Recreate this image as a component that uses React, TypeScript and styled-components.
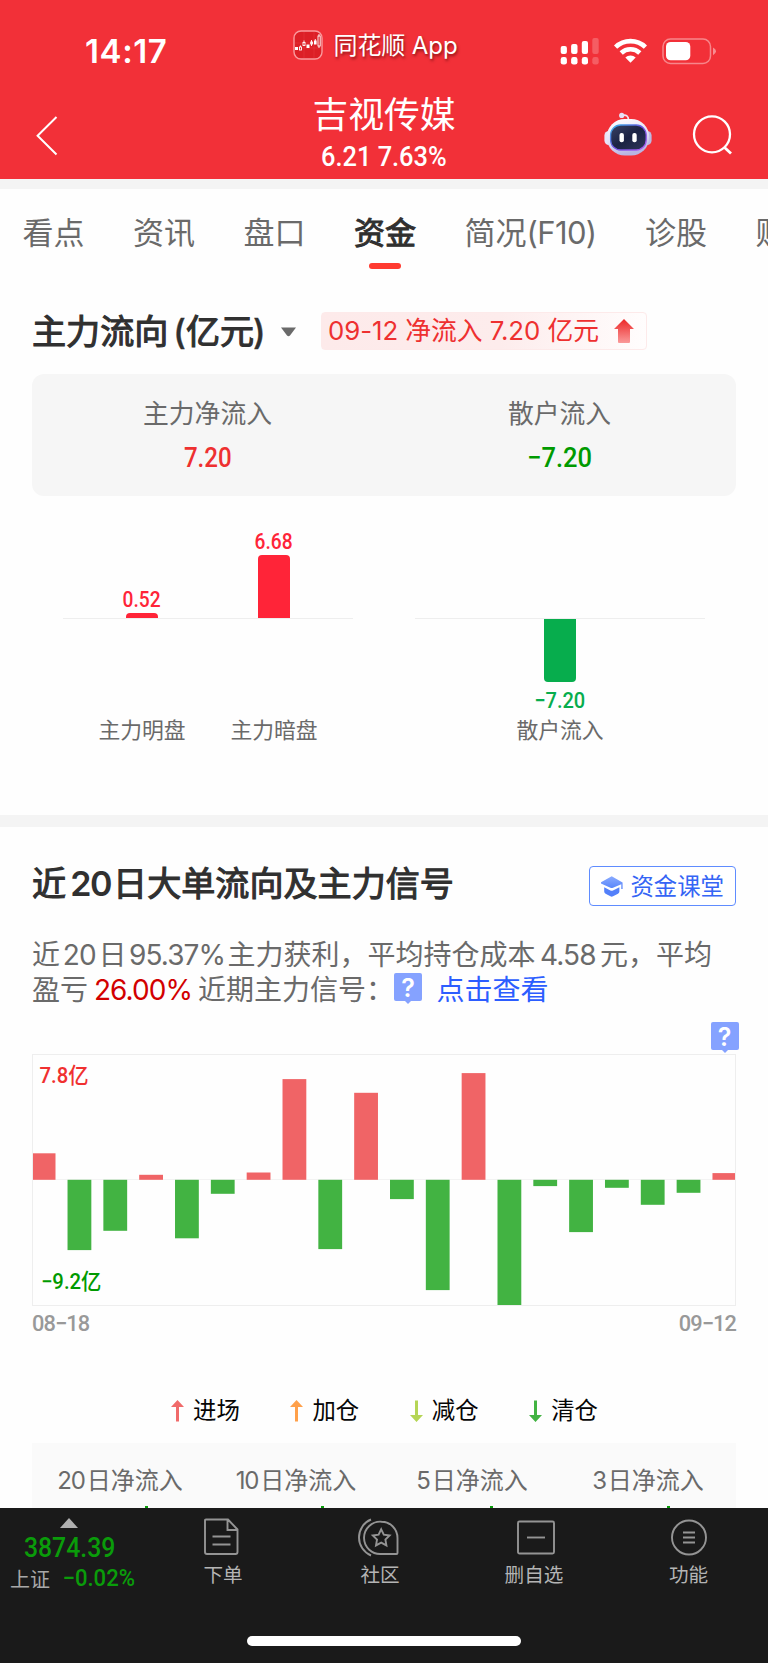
import React from "react";
import styled, { createGlobalStyle } from "styled-components";

const cjk = '"Noto Sans CJK SC", sans-serif';
const sans = `Inter, ${cjk}`;
const din = `Roboto, ${cjk}`;

const GlobalStyle = createGlobalStyle`
  *, *::before, *::after { box-sizing: border-box; }
  body { margin: 0; background: #fff; font-family: ${sans}; }
  svg { display: block; flex: none; overflow: visible; }
`;

const Screen = styled.div`
  width: 768px;
  height: 1663px;
  display: flex;
  flex-direction: column;
  overflow: hidden;
  background: #fefefe;
  white-space: nowrap;
`;

/* Figures set in a narrow DIN-like face */
const Figure = styled.span<{ $size: number; $narrow?: number; $weight?: number; $track?: number }>`
  display: block;
  font-family: ${din};
  font-size: ${(p) => p.$size}px;
  font-weight: ${(p) => p.$weight ?? 500};
  line-height: ${(p) => Math.round(p.$size * 1.15)}px;
  letter-spacing: ${(p) => p.$track ?? 0}px;
  transform: scaleX(${(p) => p.$narrow ?? 0.94});
`;

const Header = styled.header`
  height: 179px;
  background: #f23038;
  color: #fff;
`;

const StatusBar = styled.div`
  height: 90px;
  padding: 30px 51px 0 85px;
  display: flex;
  align-items: flex-start;
`;

const Time = styled.div`
  width: 208px;
  padding-top: 1px;
  font-size: 33px;
  font-weight: 600;
  line-height: 40px;
  letter-spacing: 0.6px;
`;

const AppTag = styled.div`
  display: flex;
  gap: 10.5px;
  height: 30px;
  line-height: 31px;
  font-size: 24px;
  letter-spacing: -0.1px;
  text-shadow: 1px 2px 3px rgba(70, 0, 0, 0.6);
`;

const StatusIcons = styled.div`
  margin-left: auto;
  padding-top: 8px;
  display: flex;
  gap: 15px;
`;

const NavBar = styled.div`
  height: 89px;
  padding: 0 36px 0 36px;
  display: grid;
  grid-template-columns: 128px 1fr 128px;
`;

const BackSlot = styled.div`
  padding-top: 26px;
`;

const StockTitle = styled.div`
  display: flex;
  flex-direction: column;
  align-items: center;
`;

const StockName = styled.div`
  font-size: 35.8px;
  line-height: 50px;
  margin-bottom: 2px;
`;

const NavActions = styled.div`
  display: flex;
  justify-content: flex-end;
  gap: 40px;
  padding-top: 22px;
`;

const Divider = styled.div<{ $height: number }>`
  flex: none;
  height: ${(p) => p.$height}px;
  background: #f4f4f4;
`;

const Tabs = styled.nav`
  height: 112px;
  padding: 18px 0 0 22.5px;
  display: flex;
  gap: 48.5px;
  overflow: hidden;
`;

const Tab = styled.div<{ $active?: boolean }>`
  flex: none;
  display: flex;
  flex-direction: column;
  align-items: center;
  font-size: 31px;
  line-height: 51px;
  height: 70px;
  color: ${(p) => (p.$active ? "#303030" : "#6a6a6a")};
  -webkit-text-stroke: ${(p) => (p.$active ? "1px #303030" : "0")};
  &::after {
    content: "";
    display: ${(p) => (p.$active ? "block" : "none")};
    width: 32px;
    height: 6px;
    margin-top: 5px;
    border-radius: 3px;
    background: #ff3a30;
  }
`;

const TabLatin = styled.span`
  letter-spacing: -0.6px;
`;

const FlowHead = styled.div`
  height: 73px;
  padding: 11px 32px 0;
  display: flex;
  align-items: flex-start;
`;

const FlowTitle = styled.h2`
  margin: 0;
  width: 249px;
  font-size: 34.1px;
  font-weight: 400;
  -webkit-text-stroke: 1.1px #303030;
  line-height: 40px;
  color: #303030;
`;

const FlowParen = styled.span<{ $before?: number }>`
  margin-left: ${(p) => p.$before ?? 0}px;
  font-weight: 500;
  -webkit-text-stroke-width: 0.4px;
`;

const CaretSlot = styled.div`
  width: 40px;
  padding-top: 15px;
`;

const FlowBadge = styled.div`
  height: 38px;
  width: 326px;
  padding: 0 12px 0 6px;
  display: flex;
  align-items: center;
  justify-content: space-between;
  border: 1px solid #fdeaea;
  border-radius: 4px;
  background: linear-gradient(90deg, #fdeaea 0%, #fdecec 55%, #fffdfd 100%);
  color: #ee3030;
  font-size: 25.8px;
  line-height: 36px;
`;

const BadgeText = styled.span`
  letter-spacing: -0.06px;
`;

const Summary = styled.div`
  margin: 0 32px;
  height: 122px;
  flex: none;
  border-radius: 12px;
  background: #f6f6f6;
  display: grid;
  grid-template-columns: 1fr 1fr;
`;

const SummaryCell = styled.div<{ $tone: string }>`
  display: flex;
  flex-direction: column;
  align-items: center;
  padding: 21px 1px 0 0;
  gap: 9px;
  color: ${(p) => p.$tone};
`;

const SummaryLabel = styled.div`
  font-size: 25.8px;
  line-height: 38px;
  color: #6a6a6a;
`;

const FlowCharts = styled.div`
  height: 319px;
  flex: none;
  padding: 0 63px 0 63px;
  display: flex;
  justify-content: space-between;
`;

const FlowChart = styled.div`
  width: 290px;
  height: 260px;
  display: flex;
  justify-content: center;
  gap: 32px;
  background: linear-gradient(#eee, #eee) 0 122px / 100% 1px no-repeat;
`;

const BarColumn = styled.div<{ $tone: string }>`
  width: 100px;
  display: flex;
  flex-direction: column;
  align-items: center;
  color: ${(p) => p.$tone};
`;

const UpperHalf = styled.div`
  height: 122px;
  display: flex;
  flex-direction: column;
  align-items: center;
  justify-content: flex-end;
  gap: 1px;
`;

const LowerHalf = styled.div`
  height: 95px;
  padding-top: 1px;
  display: flex;
  flex-direction: column;
  align-items: center;
  gap: 6px;
`;

const FlowBar = styled.div<{ $size: number; $down?: boolean }>`
  flex: none;
  width: 32px;
  height: ${(p) => p.$size}px;
  background: currentColor;
  border-radius: ${(p) => (p.$down ? "0 0 4px 4px" : "4px 4px 0 0")};
`;

const BarName = styled.div`
  font-size: 21.8px;
  line-height: 34px;
  color: #6a6a6a;
`;

const SignalHead = styled.div`
  flex: none;
  height: 101px;
  padding: 39px 32px 0;
  display: flex;
  justify-content: space-between;
`;

const SignalTitle = styled.h2`
  margin: 0;
  font-size: 34.1px;
  font-weight: 400;
  -webkit-text-stroke: 1.1px #303030;
  line-height: 36px;
  color: #303030;
`;

const TitleDays = styled.span`
  display: inline-block;
  width: 47px;
  padding-left: 2px;
  text-align: center;
  font-weight: 600;
  -webkit-text-stroke-width: 0;
  letter-spacing: -1.6px;
`;

const LessonButton = styled.button`
  width: 147px;
  height: 40px;
  padding: 1px 11px 0 11px;
  display: flex;
  align-items: center;
  justify-content: space-between;
  border: 1.5px solid #5f8cff;
  border-radius: 4px;
  background: #fff;
  color: #3565f5;
  font: 400 23.4px/36px ${sans};
`;

const Paragraph = styled.div`
  flex: none;
  height: 94px;
  padding: 9.5px 32px 0;
  font-size: 28px;
  line-height: 35.5px;
  color: #6a6a6a;
`;

const ParagraphLine = styled.div`
  display: flex;
`;

const Inset = styled.span<{ $width: number; $tone?: string; $track?: number }>`
  width: ${(p) => p.$width}px;
  text-align: center;
  letter-spacing: ${(p) => p.$track ?? -0.9}px;
  color: ${(p) => p.$tone ?? "inherit"};
`;

const Link = styled.a`
  margin-left: 14.5px;
  color: #2c5dff;
`;

const Help = styled.span`
  flex: none;
  width: 28px;
  height: 28px;
  border-radius: 2px;
  background: #85a2ff;
  color: #fff;
  font: 600 25px/31px Inter, sans-serif;
  text-align: center;
  position: relative;
  &::after {
    content: "";
    position: absolute;
    left: 10px;
    top: 27px;
    border: 4px solid transparent;
    border-top-color: #85a2ff;
    border-bottom: 0;
  }
`;

const HelpRow = styled.div`
  flex: none;
  height: 32px;
  padding-right: 29.5px;
  display: flex;
  justify-content: flex-end;
`;

const Plot = styled.div`
  flex: none;
  margin: 0 32px;
  height: 252px;
  border: 1px solid #eee;
  display: flex;
  position: relative;
  background: linear-gradient(#f3f3f3, #f3f3f3) 0 124px / 100% 1px no-repeat;
`;

const DayBars = styled.svg`
  width: 702px;
  height: 250px;
  overflow: hidden;
`;

const RangeLabel = styled.div<{ $low?: boolean }>`
  position: absolute;
  left: ${(p) => (p.$low ? 6 : 5)}px;
  top: ${(p) => (p.$low ? 214 : 8)}px;
  color: ${(p) => (p.$low ? "#009a00" : "#f03030")};
`;

const Dates = styled.div`
  flex: none;
  height: 81px;
  padding: 5px 32px 0;
  display: flex;
  justify-content: space-between;
  color: #999;
`;

const Legend = styled.div`
  flex: none;
  height: 56px;
  padding: 5px 0 0 171px;
  display: flex;
`;

const LegendItem = styled.div`
  width: 119.4px;
  display: flex;
  align-items: center;
  gap: 9px;
  height: 38px;
  font-size: 23.4px;
  line-height: 38px;
  color: #050505;
`;

const Periods = styled.div`
  flex: none;
  margin: 0 32px;
  height: 65px;
  display: grid;
  grid-template-columns: repeat(4, 1fr);
  background: #fafafa;
  overflow: hidden;
`;

const Period = styled.div`
  padding-top: 20px;
  display: flex;
  flex-direction: column;
  align-items: center;
  font-size: 24px;
  line-height: 36px;
  color: #6a6a6a;
`;

const PeriodDays = styled.span`
  letter-spacing: -1.2px;
  margin-right: 2px;
`;

const PeriodTick = styled.i<{ $shift: number }>`
  width: 3px;
  height: 2px;
  margin: 7px 0 0 ${(p) => p.$shift * 2}px;
  background: #0a9c0a;
`;

const Dock = styled.footer`
  flex: 1;
  background: #1a1a1a;
  display: flex;
  flex-direction: column;
  color: #b4b4b4;
`;

const DockRow = styled.div`
  height: 128px;
  display: grid;
  grid-template-columns: 145px 156px 158px 150px 159px;
`;

const IndexCell = styled.div`
  padding-top: 10px;
  width: 138px;
  display: flex;
  flex-direction: column;
  align-items: center;
  color: #0a9c0a;
`;

const IndexPrice = styled.div`
  margin: 4px 0 0 2px;
`;

const IndexChange = styled.div`
  display: flex;
  align-items: center;
  gap: 11px;
  height: 30px;
  width: 129px;
  margin-left: 11px;
`;

const IndexName = styled.span`
  width: 40px;
  color: #a8a8a8;
  font-size: 20px;
  line-height: 30px;
  padding-top: 2px;
`;

const DockItem = styled.div`
  display: flex;
  flex-direction: column;
  align-items: center;
  gap: 1px;
  padding-top: 10px;
  font-size: 19.6px;
  line-height: 36px;
`;

const DockIcon = styled.div<{ $shift: number }>`
  position: relative;
  left: ${(p) => p.$shift}px;
`;

const HomeBar = styled.div`
  width: 274px;
  height: 10px;
  margin: 0 auto;
  border-radius: 5px;
  background: #fff;
`;

const LogoIcon = () => (
  <svg width="30" height="30" viewBox="0 0 30 30">
    <rect x="1" y="1" width="28" height="28" rx="7" fill="#dc1f26" stroke="#fa9a9d" strokeWidth="1.4" />
    <path d="M2 13H28M2 18H28M11 2V28M21 2V28" stroke="#e93a40" strokeWidth=".5" />
    <g fill="#fff">
      <rect x="2" y="17" width="3" height="3" />
      <rect x="13.5" y="14.5" width="3" height="3.5" />
      <rect x="21" y="10.5" width="2.6" height="4" />
    </g>
    <g fill="none" stroke="#fff" strokeWidth=".9">
      <rect x="6.5" y="17" width="2" height="3" />
      <rect x="10" y="12.5" width="2" height="3" />
      <path d="M11 10.5V12M7.5 15.5V17M18.5 10V12M18.5 14V16M22.3 9V11M26 4V6M26 16V18" />
      <rect x="17.7" y="12" width="1.8" height="2" />
      <rect x="25" y="6" width="2.2" height="10" />
    </g>
  </svg>
);

const SignalIcon = () => (
  <svg width="39" height="28" viewBox="0 0 39 28" fill="#fff">
    <rect x="0.7" y="8" width="6.2" height="8" rx="2" />
    <rect x="11.1" y="6" width="6.4" height="10" rx="2" />
    <rect x="21.8" y="3" width="6.2" height="13" rx="2" />
    <rect x="32.3" y="0" width="6.4" height="16" rx="2" opacity=".22" />
    <rect x="0.7" y="19" width="6.2" height="7.6" rx="2.4" />
    <rect x="11.1" y="19" width="6.4" height="7.6" rx="2.4" />
    <rect x="21.8" y="19" width="6.2" height="7.6" rx="2.4" />
    <rect x="32.3" y="19" width="6.4" height="7.6" rx="2.4" opacity=".22" />
  </svg>
);

const WifiIcon = () => (
  <svg width="33" height="26" viewBox="0 0 33 26" fill="none" stroke="#fff" strokeWidth="4.6">
    <path d="M1.6 9.2A21.4 21.4 0 0 1 31.4 9.2" />
    <path d="M7.2 15A13.4 13.4 0 0 1 25.8 15" />
    <path d="M16.5 24.8L11.3 19.6A7.4 7.4 0 0 1 21.7 19.6Z" fill="#fff" stroke="none" />
  </svg>
);

const BatteryIcon = () => (
  <svg width="55" height="27" viewBox="0 0 55 27">
    <rect x="1" y="1" width="47.5" height="24.5" rx="7.5" fill="none" stroke="#fff" strokeWidth="1.5" opacity=".42" />
    <rect x="4" y="4" width="24.3" height="18.3" rx="4.6" fill="#fff" />
    <path d="M51 9.5Q54 11 54 13.2T51 17.2Z" fill="#fff" opacity=".45" />
  </svg>
);

const BackIcon = () => (
  <svg width="22" height="40" viewBox="0 0 22 40">
    <path d="M20.5 1L1.6 19.8L20.5 38.5" fill="none" stroke="#fff" strokeWidth="2" />
  </svg>
);

const RobotIcon = () => (
  <svg width="48" height="44" viewBox="0 0 48 44">
    <defs>
      <linearGradient id="head" x1="0" y1="0" x2=".3" y2="1">
        <stop offset="0" stopColor="#ffffff" />
        <stop offset=".6" stopColor="#e3e0f6" />
        <stop offset="1" stopColor="#b9b4e2" />
      </linearGradient>
      <linearGradient id="rim" x1="0" y1="0" x2="1" y2="1">
        <stop offset="0" stopColor="#35b6e8" />
        <stop offset=".5" stopColor="#6d50e0" />
        <stop offset="1" stopColor="#b05cf0" />
      </linearGradient>
      <linearGradient id="visor" x1="0" y1="0" x2="1" y2="1">
        <stop offset="0" stopColor="#3a4265" />
        <stop offset=".5" stopColor="#1b2243" />
        <stop offset="1" stopColor="#2f3658" />
      </linearGradient>
    </defs>
    <path d="M18 3.5Q24.5 2 24.5 8" fill="none" stroke="#f0e4f2" strokeWidth="1.8" />
    <circle cx="17.7" cy="3.4" r="2.6" fill="#e6e0f6" />
    <rect x=".4" y="19" width="9" height="14" rx="4.5" fill="#e8e5f8" />
    <rect x="38.6" y="19" width="9" height="14" rx="4.5" fill="#bdb9e2" />
    <rect x="2.8" y="7" width="42.4" height="36.6" rx="18" fill="url(#head)" />
    <rect x="6.6" y="13" width="35.6" height="25" rx="10" fill="url(#visor)" stroke="url(#rim)" strokeWidth="1.3" />
    <rect x="15.5" y="21" width="4.4" height="9.2" rx="2" fill="#fff" />
    <rect x="28.3" y="21" width="4.4" height="9.2" rx="2" fill="#fff" />
  </svg>
);

const SearchIcon = () => (
  <svg width="40" height="40" viewBox="0 0 40 40" fill="none" stroke="#fff" strokeWidth="2.3">
    <circle cx="20" cy="22.3" r="18" />
    <path d="M32 35L39 41.5" strokeWidth="2.8" />
  </svg>
);

const CaretIcon = () => (
  <svg width="15" height="10" viewBox="0 0 15 10">
    <path d="M0 .5H15L9 8.5Q7.5 10 6 8.5Z" fill="#6a6a6a" />
  </svg>
);

const RiseIcon = () => (
  <svg width="20" height="24" viewBox="0 0 20 24">
    <defs>
      <linearGradient id="rise" x1="0" y1="0" x2="0" y2="1">
        <stop offset="0" stopColor="#ec2626" />
        <stop offset="1" stopColor="#fa9a9a" />
      </linearGradient>
    </defs>
    <path d="M10 0L20 10H16V23Q16 24 15 24H5Q4 24 4 23V10H0Z" fill="url(#rise)" />
  </svg>
);

const CapIcon = () => (
  <svg width="22" height="21" viewBox="0 0 22 21">
    <defs>
      <linearGradient id="cap" x1="0" y1="0" x2="0" y2="1">
        <stop offset="0" stopColor="#8aabff" />
        <stop offset="1" stopColor="#5583fa" />
      </linearGradient>
    </defs>
    <path d="M10.7 0.3L21.6 6.4V13H20.3V8.2L12 11.8Q10.7 12.4 9.4 11.8L0 7.6V6.2Z" fill="url(#cap)" />
    <path d="M3.2 11.3L9.4 14.4Q10.7 15 12 14.4L18.4 11.3V15.6Q18.4 17 17 17.8L12 20.3Q10.7 21 9.4 20.3L4.6 17.8Q3.2 17 3.2 15.6Z" fill="#5380fa" />
  </svg>
);

const LegendArrow = ({ color, down }: { color: string; down?: boolean }) => (
  <svg width="13" height="22" viewBox="0 0 13 22">
    <path
      d="M6.5 0L13 7H8V21.5H5V7H0Z"
      fill={color}
      transform={down ? "rotate(180 6.5 11)" : undefined}
    />
  </svg>
);

const UpTriangle = () => (
  <svg width="18" height="10" viewBox="0 0 18 10">
    <path d="M9 0L18 10H0Z" fill="#b0b0b0" />
  </svg>
);

const line = { fill: "none", stroke: "#949494", strokeWidth: 1.9 };

const OrderIcon = () => (
  <svg width="36" height="38" viewBox="0 0 36 38" {...line}>
    <path d="M3 1.5H25L34.5 11.5V34Q34.5 36 32.5 36H4Q2 36 2 34V2.5Q2 1.5 3 1.5ZM24.5 2V12H34M9.5 18.5H27.5M9.5 26.5H27.5" />
  </svg>
);

const CommunityIcon = () => (
  <svg width="42" height="38" viewBox="0 0 42 38" {...line}>
    <path d="M24.5 3.7A16.2 16.2 0 1 0 24.5 36H39.5Q40.5 36 40.5 35V20A16 16.3 0 0 0 24.5 3.7Z" />
    <path d="M14 1.5A19.5 19.5 0 0 0 14 37.5" />
    <path
      d="M24.2 11.3L26.8 16.7L32.6 17.5L28.4 21.6L29.4 27.4L24.2 24.6L19 27.4L20 21.6L15.8 17.5L21.6 16.7Z"
      strokeWidth="1.9"
    />
  </svg>
);

const RemoveIcon = () => (
  <svg width="38" height="38" viewBox="0 0 38 38" {...line}>
    <rect x="1" y="3.5" width="36" height="32" rx="1.5" />
    <path d="M10 19.5H28" />
  </svg>
);

const MenuIcon = () => (
  <svg width="36" height="38" viewBox="0 0 36 38" {...line}>
    <circle cx="18" cy="19.5" r="17" />
    <path d="M12 14.5H24M12 19.5H24M12 24.5H24" />
  </svg>
);

const tabs = ["看点", "资讯", "盘口", "资金", "简况", "诊股", "财务"];

const days = [
  26.5, -70.3, -51, 5, -58.5, -14, 7.3, 100.7, -69.3, 87, -19.3, -110.3, 106.7, -125.5, -6.3, -52.3, -8, -25,
  -13, 6.7,
];

const legend = [
  { name: "进场", color: "#f06a6a", down: false },
  { name: "加仓", color: "#ffa04a", down: false },
  { name: "减仓", color: "#b5d555", down: true },
  { name: "清仓", color: "#42b342", down: true },
];

const periods = [
  { n: "20", shift: 26 },
  { n: "10", shift: 26.5 },
  { n: "5", shift: 19.5 },
  { n: "3", shift: 20 },
];

const dock = [
  { name: "下单", icon: <OrderIcon />, shift: -2.5 },
  { name: "社区", icon: <CommunityIcon />, shift: -2 },
  { name: "删自选", icon: <RemoveIcon />, shift: 1.5 },
  { name: "功能", icon: <MenuIcon />, shift: 0 },
];

export default function App() {
  return (
    <>
      <GlobalStyle />
      <Screen>
        <Header>
          <StatusBar>
            <Time>14:17</Time>
            <AppTag>
              <LogoIcon />
              <span>同花顺 App</span>
            </AppTag>
            <StatusIcons>
              <SignalIcon />
              <WifiIcon />
              <BatteryIcon />
            </StatusIcons>
          </StatusBar>
          <NavBar>
            <BackSlot>
              <BackIcon />
            </BackSlot>
            <StockTitle>
              <StockName>吉视传媒</StockName>
              <Figure $size={27}>6.21 7.63%</Figure>
            </StockTitle>
            <NavActions>
              <RobotIcon />
              <SearchIcon />
            </NavActions>
          </NavBar>
        </Header>
        <Divider $height={10} />

        <Tabs>
          {tabs.map((t) => (
            <Tab key={t} $active={t === "资金"}>
              <span>
                {t}
                {t === "简况" && <TabLatin>(F10)</TabLatin>}
              </span>
            </Tab>
          ))}
        </Tabs>

        <FlowHead>
          <FlowTitle>
            主力流向<FlowParen $before={5}>(</FlowParen>亿元<FlowParen $before={-1}>)</FlowParen>
          </FlowTitle>
          <CaretSlot>
            <CaretIcon />
          </CaretSlot>
          <FlowBadge>
            <BadgeText>09-12 净流入 7.20 亿元</BadgeText>
            <RiseIcon />
          </FlowBadge>
        </FlowHead>

        <Summary>
          <SummaryCell $tone="#ee3030">
            <SummaryLabel>主力净流入</SummaryLabel>
            <Figure $size={28} $narrow={0.86}>
              7.20
            </Figure>
          </SummaryCell>
          <SummaryCell $tone="#009a00">
            <SummaryLabel>散户流入</SummaryLabel>
            <Figure $size={28} $narrow={0.91}>
              −7.20
            </Figure>
          </SummaryCell>
        </Summary>

        <FlowCharts>
          <FlowChart>
            <BarColumn $tone="#ff2438">
              <UpperHalf>
                <Figure $size={21.8} $narrow={0.88}>
                  0.52
                </Figure>
                <FlowBar $size={5} />
              </UpperHalf>
              <LowerHalf />
              <BarName>主力明盘</BarName>
            </BarColumn>
            <BarColumn $tone="#ff2438">
              <UpperHalf>
                <Figure $size={21.8} $narrow={0.88}>
                  6.68
                </Figure>
                <FlowBar $size={63} />
              </UpperHalf>
              <LowerHalf />
              <BarName>主力暗盘</BarName>
            </BarColumn>
          </FlowChart>
          <FlowChart>
            <BarColumn $tone="#07ad4d">
              <UpperHalf />
              <LowerHalf>
                <FlowBar $size={63} $down />
                <Figure $size={21.8} $narrow={0.92}>
                  −7.20
                </Figure>
              </LowerHalf>
              <BarName>散户流入</BarName>
            </BarColumn>
          </FlowChart>
        </FlowCharts>

        <Divider $height={12} />

        <SignalHead>
          <SignalTitle>
            近<TitleDays>20</TitleDays>日大单流向及主力信号
          </SignalTitle>
          <LessonButton>
            <CapIcon />
            资金课堂
          </LessonButton>
        </SignalHead>

        <Paragraph>
          <ParagraphLine>
            近<Inset $width={38.5}>20</Inset>日<Inset $width={101}>95.37%</Inset>主力获利，平均持仓成本
            <Inset $width={64.5}>4.58</Inset>元，平均
          </ParagraphLine>
          <ParagraphLine>
            盈亏
            <Inset $width={110} $tone="#d20000">
              26.00%
            </Inset>
            近期主力信号：
            <Help>?</Help>
            <Link>点击查看</Link>
          </ParagraphLine>
        </Paragraph>

        <HelpRow>
          <Help>?</Help>
        </HelpRow>
        <Plot>
          <DayBars viewBox="0 0 702 250">
            {days.map((v, i) => (
              <rect
                key={i}
                x={-1.3 + i * 35.83}
                y={v > 0 ? 124.8 - v : 124.8}
                width={23.8}
                height={Math.abs(v)}
                fill={v > 0 ? "#f06466" : "#42b342"}
              />
            ))}
          </DayBars>
          <RangeLabel>
            <Figure $size={21.6}>7.8亿</Figure>
          </RangeLabel>
          <RangeLabel $low>
            <Figure $size={21.6}>−9.2亿</Figure>
          </RangeLabel>
        </Plot>
        <Dates>
          <Figure $size={21.8} $narrow={1} $track={-0.9}>
            08−18
          </Figure>
          <Figure $size={21.8} $narrow={1} $track={-0.9}>
            09−12
          </Figure>
        </Dates>

        <Legend>
          {legend.map((l) => (
            <LegendItem key={l.name}>
              <LegendArrow color={l.color} down={l.down} />
              {l.name}
            </LegendItem>
          ))}
        </Legend>

        <Periods>
          {periods.map((p) => (
            <Period key={p.n}>
              <div>
                <PeriodDays>{p.n}</PeriodDays>日净流入
              </div>
              <PeriodTick $shift={p.shift} />
            </Period>
          ))}
        </Periods>

        <Dock>
          <DockRow>
            <IndexCell>
              <UpTriangle />
              <IndexPrice>
                <Figure $size={28} $narrow={0.885}>
                  3874.39
                </Figure>
              </IndexPrice>
              <IndexChange>
                <IndexName>上证</IndexName>
                <Figure $size={23} $narrow={0.96}>
                  −0.02%
                </Figure>
              </IndexChange>
            </IndexCell>
            {dock.map((d) => (
              <DockItem key={d.name}>
                <DockIcon $shift={d.shift}>{d.icon}</DockIcon>
                {d.name}
              </DockItem>
            ))}
          </DockRow>
          <HomeBar />
        </Dock>
      </Screen>
    </>
  );
}
